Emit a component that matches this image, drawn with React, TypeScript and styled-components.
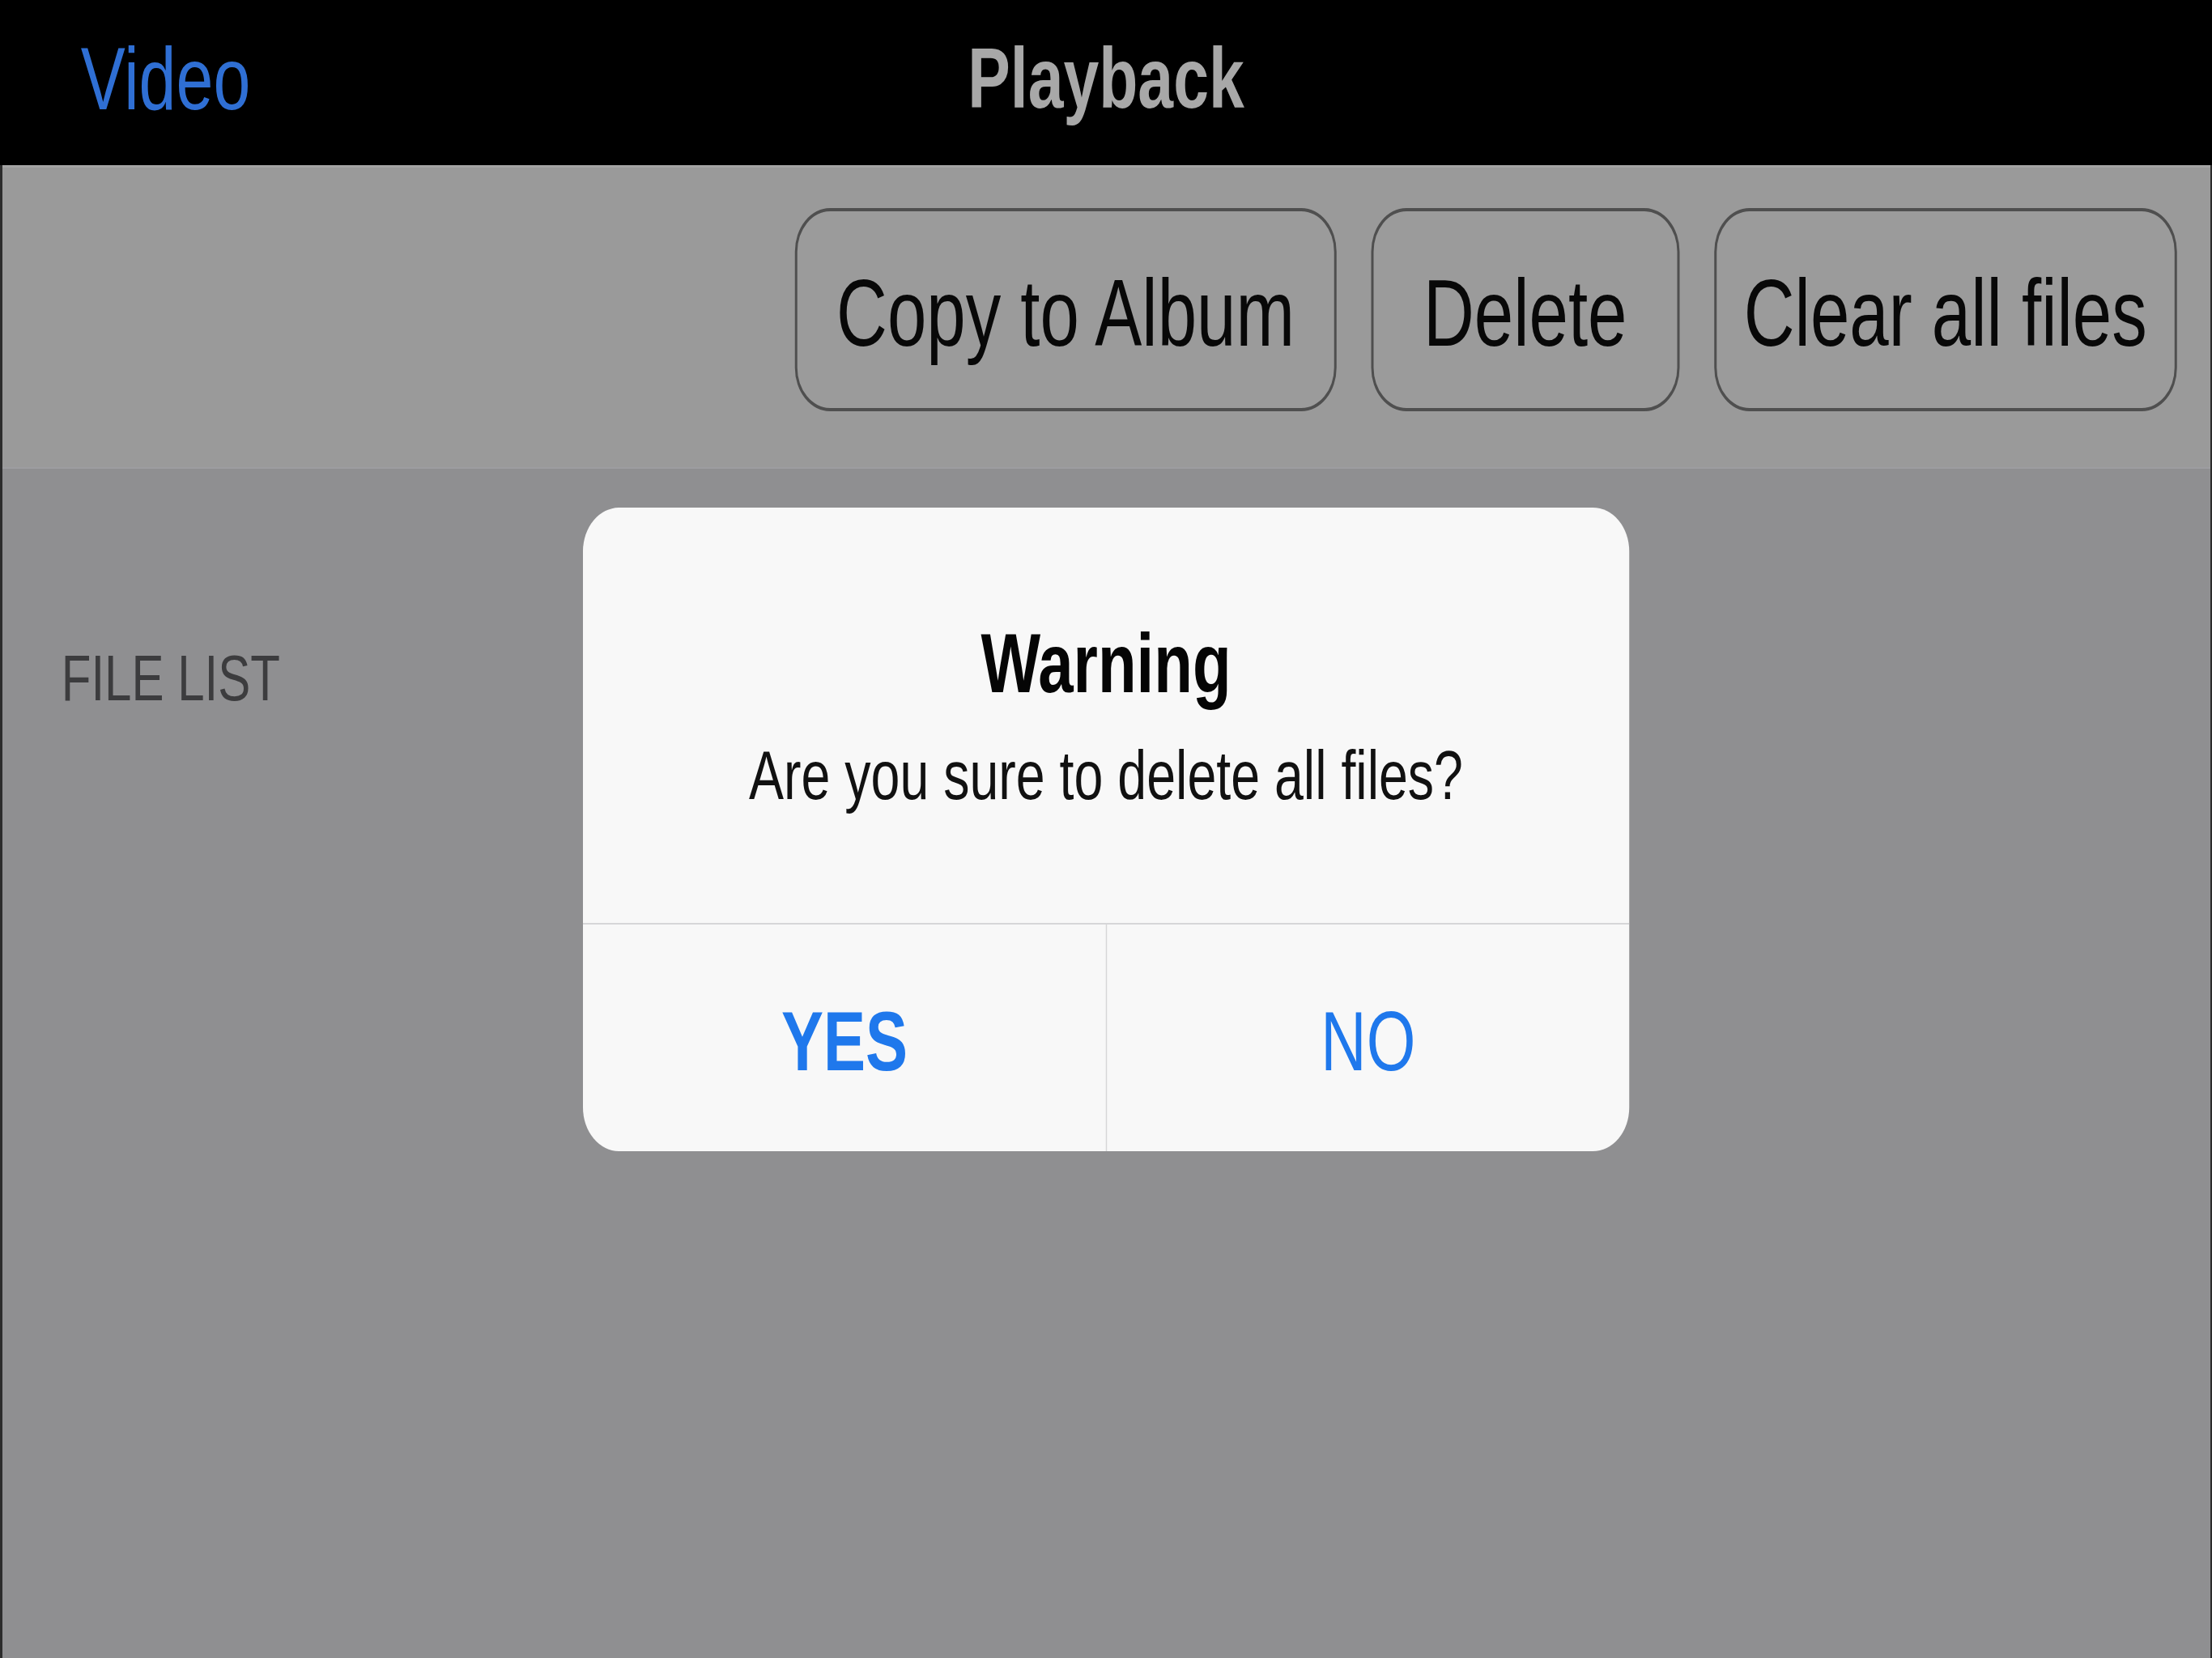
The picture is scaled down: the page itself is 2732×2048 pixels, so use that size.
import React from "react";
import styled, { createGlobalStyle } from "styled-components";

const SQUISH = 0.75;
const PAGE_W = 2732 / SQUISH;

const GlobalStyle = createGlobalStyle`
  *, *::before, *::after { box-sizing: border-box; }
  html, body {
    margin: 0;
    padding: 0;
    overflow: hidden;
    background: #8f8f91;
  }
`;

const Stage = styled.div`
  position: relative;
  width: ${PAGE_W}px;
  height: 2048px;
  transform: scaleX(${SQUISH});
  transform-origin: 0 0;
  display: flex;
  flex-direction: column;
  font-family: "Liberation Sans", Arial, sans-serif;
`;

const TopBar = styled.header`
  height: 204px;
  flex: none;
  background: #000;
  display: grid;
  grid-template-columns: 1fr auto 1fr;
  align-items: start;
  line-height: 194px;
`;

const BackLink = styled.span`
  padding-left: 133px;
  font-size: 110px;
  color: #2f6fd4;
`;

const Title = styled.h1`
  margin: 0;
  font-size: 105px;
  font-weight: 700;
  color: #a8a8a8;
`;

const Body = styled.main`
  flex: 1;
  display: flex;
  flex-direction: column;
  border-left: 4px solid #2c2c2c;
  border-right: 3px solid #2c2c2c;
`;

const Toolbar = styled.div`
  height: 373px;
  flex: none;
  background: #9a9a9a;
  border-top: 3px solid #a4a4a4;
  display: flex;
  justify-content: flex-end;
  align-items: flex-start;
  gap: 57px;
  padding: 50px 55px 0 0;
`;

const ToolButton = styled.button<{ $w: number }>`
  width: ${(p) => p.$w}px;
  height: 251px;
  flex: none;
  padding: 10px 0 0;
  border: 4px solid #4f4f4f;
  border-radius: 58px / 54px;
  background: #9b9b9b;
  color: #080808;
  font-family: inherit;
  font-size: 116px;
  line-height: 233px;
  text-align: center;
  white-space: nowrap;
`;

const Content = styled.section`
  flex: 1;
  background: #8f8f91;
  border-top: 2px solid #9d9da0;
  padding: 219px 0 0 97px;
`;

const SectionLabel = styled.div`
  font-size: 80px;
  line-height: 1;
  color: #3c3c3e;
`;

const Overlay = styled.div`
  position: absolute;
  inset: 0;
  display: flex;
  align-items: center;
  justify-content: center;
`;

const Dialog = styled.div`
  width: 1723px;
  height: 795px;
  background: #f8f8f8;
  border-radius: 60px / 54px;
  overflow: hidden;
  display: flex;
  flex-direction: column;
`;

const DialogBody = styled.div`
  height: 513px;
  flex: none;
  padding-top: 140px;
  text-align: center;
`;

const DialogTitle = styled.div`
  font-size: 104px;
  font-weight: 700;
  line-height: 1;
  color: #050505;
`;

const DialogMessage = styled.div`
  margin-top: 43px;
  font-size: 86px;
  line-height: 1;
  color: #111;
`;

const Actions = styled.div`
  flex: 1;
  display: grid;
  grid-template-columns: 1fr 1fr;
  border-top: 2px solid #d6d6d8;
`;

const ActionButton = styled.button<{ $bold?: boolean; $divider?: boolean }>`
  border: none;
  border-left: ${(p) => (p.$divider ? "2px solid #d6d6d8" : "none")};
  background: transparent;
  padding: 8px 0 0;
  font-family: inherit;
  font-size: 104px;
  line-height: 1;
  font-weight: ${(p) => (p.$bold ? 700 : 400)};
  color: #1f78ec;
`;

export default function App() {
  return (
    <>
      <GlobalStyle />
      <Stage>
        <TopBar>
          <BackLink>Video</BackLink>
          <Title>Playback</Title>
          <span />
        </TopBar>
        <Body>
          <Toolbar>
            <ToolButton $w={892}>Copy to Album</ToolButton>
            <ToolButton $w={508}>Delete</ToolButton>
            <ToolButton $w={762}>Clear all files</ToolButton>
          </Toolbar>
          <Content>
            <SectionLabel>FILE LIST</SectionLabel>
          </Content>
        </Body>
        <Overlay>
          <Dialog role="alertdialog">
            <DialogBody>
              <DialogTitle>Warning</DialogTitle>
              <DialogMessage>Are you sure to delete all files?</DialogMessage>
            </DialogBody>
            <Actions>
              <ActionButton $bold>YES</ActionButton>
              <ActionButton $divider>NO</ActionButton>
            </Actions>
          </Dialog>
        </Overlay>
      </Stage>
    </>
  );
}
